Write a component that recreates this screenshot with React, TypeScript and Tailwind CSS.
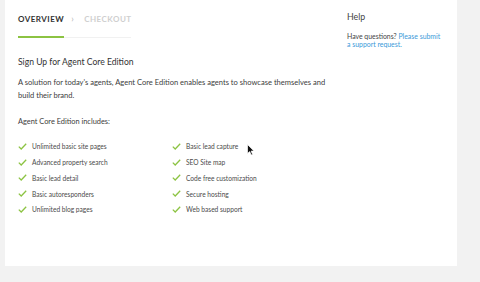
import React from 'react';

const features: [string, string][] = [
  ['Unlimited basic site pages', 'Basic lead capture'],
  ['Advanced property search', 'SEO Site map'],
  ['Basic lead detail', 'Code free customization'],
  ['Basic autoresponders', 'Secure hosting'],
  ['Unlimited blog pages', 'Web based support'],
];

const Check = () => (
  <svg width="9" height="7" viewBox="0 0 9 7" className="shrink-0">
    <polyline points="0.8,3.6 3.2,6 8.2,0.8" fill="none" stroke="#8cc342" strokeWidth="1.3" />
  </svg>
);

const Item = ({ label }: { label: string }) => (
  <div className="flex items-center h-[15.75px]">
    <Check />
    <span className="ml-[5px] text-[6.6px] leading-[8px] text-[#4a4a4a]">{label}</span>
  </div>
);

export default function App() {
  return (
    <div
      className="relative w-[480px] h-[282px] bg-[#f2f2f2] overflow-hidden"
      style={{ fontFamily: 'Lato, "Open Sans", sans-serif' }}
    >
      <div className="ml-[5px] w-[452px] h-[266px] bg-white flex">
        {/* Main column */}
        <div className="w-[329px] pl-[13px] pt-[15px]">
          <div className="flex items-center h-[8px] text-[8px] leading-[8px] font-bold uppercase tracking-[0.06em]">
            <span className="text-[#333]">Overview</span>
            <span className="ml-[7px] mr-[10px] text-[#b5b5b5] font-normal text-[9px]">›</span>
            <span className="text-[#cfcfcf]">Checkout</span>
          </div>
          <div className="mt-[13px] w-[113px] border-b border-[#f1f1f1] h-[2px]">
            <div className="w-[46px] h-[2px] bg-[#8cc342]" />
          </div>

          <h2 className="mt-[18px] text-[8.6px] leading-[12px] text-[#333]">Sign Up for Agent Core Edition</h2>
          <p className="mt-[8px] text-[7.55px] leading-[13px] text-[#3c3c3c] w-[312px]">
            A solution for today's agents, Agent Core Edition enables agents to showcase themselves and build their brand.
          </p>
          <p className="mt-[13px] text-[7.4px] leading-[13px] text-[#3c3c3c]">Agent Core Edition includes:</p>

          <div className="mt-[10.5px] grid grid-cols-[154px_154px]">
            {features.map(([a, b]) => (
              <React.Fragment key={a}>
                <Item label={a} />
                <Item label={b} />
              </React.Fragment>
            ))}
          </div>
        </div>

        {/* Help column */}
        <div className="pl-[13px] pt-[11px]">
          <h3 className="text-[8.8px] leading-[12px] text-[#444]">Help</h3>
          <p className="mt-[9px] w-[96px] text-[6.9px] leading-[8px] text-[#444]">
            Have questions? <span className="text-[#3b9ad9]">Please submit a support request.</span>
          </p>
        </div>
      </div>

      {/* mouse cursor */}
      <svg className="absolute left-[247px] top-[144px]" width="8" height="12" viewBox="0 0 8 12">
        <path d="M0.5 0.5 L0.5 9.5 L2.7 7.6 L4.2 11 L5.6 10.4 L4.1 7.1 L7 7.1 Z" fill="#111" stroke="#fff" strokeWidth="0.7" />
      </svg>
    </div>
  );
}
